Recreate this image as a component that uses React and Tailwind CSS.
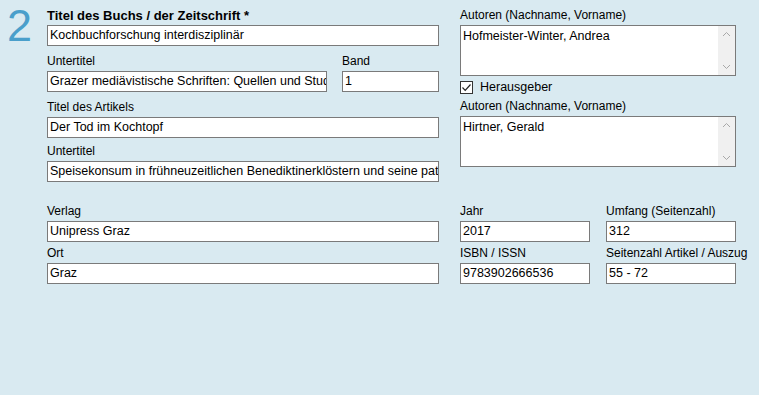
import React from 'react';

const font = { fontFamily: '"Liberation Sans", Arial, sans-serif' };

const Label = ({ children, bold }) => (
  <div className={`leading-[15px] text-black whitespace-nowrap ${bold ? 'text-[13px] font-bold' : 'text-[12px]'}`}>
    {children}
  </div>
);

const Input = ({ value }) => (
  <div className="h-[21px] mt-[2px] bg-white border border-[#7a7a7a] px-[2px] text-[12.5px] leading-[19px] text-black whitespace-nowrap overflow-hidden">
    {value}
  </div>
);

const Field = ({ label, value, bold, className = '' }) => (
  <div className={className}>
    <Label bold={bold}>{label}</Label>
    <Input value={value} />
  </div>
);

const Chevron = ({ up }) => (
  <svg width="9" height="6" viewBox="0 0 9 6" fill="none" stroke="#a8a8a8" strokeWidth="1">
    {up ? <path d="M1 5 L4.5 1.5 L8 5" /> : <path d="M1 1 L4.5 4.5 L8 1" />}
  </svg>
);

const TextArea = ({ value }) => (
  <div className="h-[51px] mt-[2px] bg-white border border-[#7a7a7a] flex text-[12.5px] text-black">
    <div className="flex-1 px-[2px] pt-[3px] leading-[15px]">{value}</div>
    <div className="w-[17px] bg-[#f0f0f0] flex flex-col items-center justify-between py-[5px]">
      <Chevron up />
      <Chevron />
    </div>
  </div>
);

const App = () => {
  return (
    <div className="w-[759px] h-[395px] bg-[#d9eaf1] relative overflow-hidden" style={font}>
      <div className="flex">
        <div className="w-[47px] pl-[7px] pt-[3px] text-[45px] leading-[45px] text-[#4a9fcb]">2</div>

        <div className="w-[392px] pt-[8px]">
          <Field bold label="Titel des Buchs / der Zeitschrift *" value="Kochbuchforschung interdisziplinär" />
          <div className="flex mt-[8px] gap-[15px]">
            <Field className="w-[280px]" label="Untertitel" value="Grazer mediävistische Schriften: Quellen und Stud" />
            <Field className="w-[97px]" label="Band" value="1" />
          </div>
          <Field className="mt-[8px]" label="Titel des Artikels" value="Der Tod im Kochtopf" />
          <Field className="mt-[6px]" label="Untertitel" value="Speisekonsum in frühneuzeitlichen Benediktinerklöstern und seine patl" />
        </div>

        <div className="w-[276px] ml-[21px] pt-[8px]">
          <Label>Autoren (Nachname, Vorname)</Label>
          <TextArea value="Hofmeister-Winter, Andrea" />
          <div className="flex items-center mt-[4px] h-[14px]">
            <div className="w-[13px] h-[13px] bg-white border border-[#333333] flex items-center justify-center">
              <svg width="11" height="11" viewBox="0 0 11 11" fill="none" stroke="#222" strokeWidth="1.2">
                <path d="M1.5 5.5 L4.2 8.3 L9.5 2.5" />
              </svg>
            </div>
            <span className="ml-[7px] text-[12.5px] leading-[15px] text-black">Herausgeber</span>
          </div>
          <div className="mt-[5px]">
            <Label>Autoren (Nachname, Vorname)</Label>
            <TextArea value="Hirtner, Gerald" />
          </div>
        </div>
      </div>

      <div className="flex mt-[22px]">
        <div className="w-[392px] ml-[47px]">
          <Field label="Verlag" value="Unipress Graz" />
          <Field className="mt-[4px]" label="Ort" value="Graz" />
        </div>
        <div className="ml-[21px] grid grid-cols-[130px_130px] gap-x-[16px] gap-y-[4px]">
          <Field label="Jahr" value="2017" />
          <Field label="Umfang (Seitenzahl)" value="312" />
          <Field label="ISBN / ISSN" value="9783902666536" />
          <Field label="Seitenzahl Artikel / Auszug" value="55 - 72" />
        </div>
      </div>
    </div>
  );
};

export default App;
